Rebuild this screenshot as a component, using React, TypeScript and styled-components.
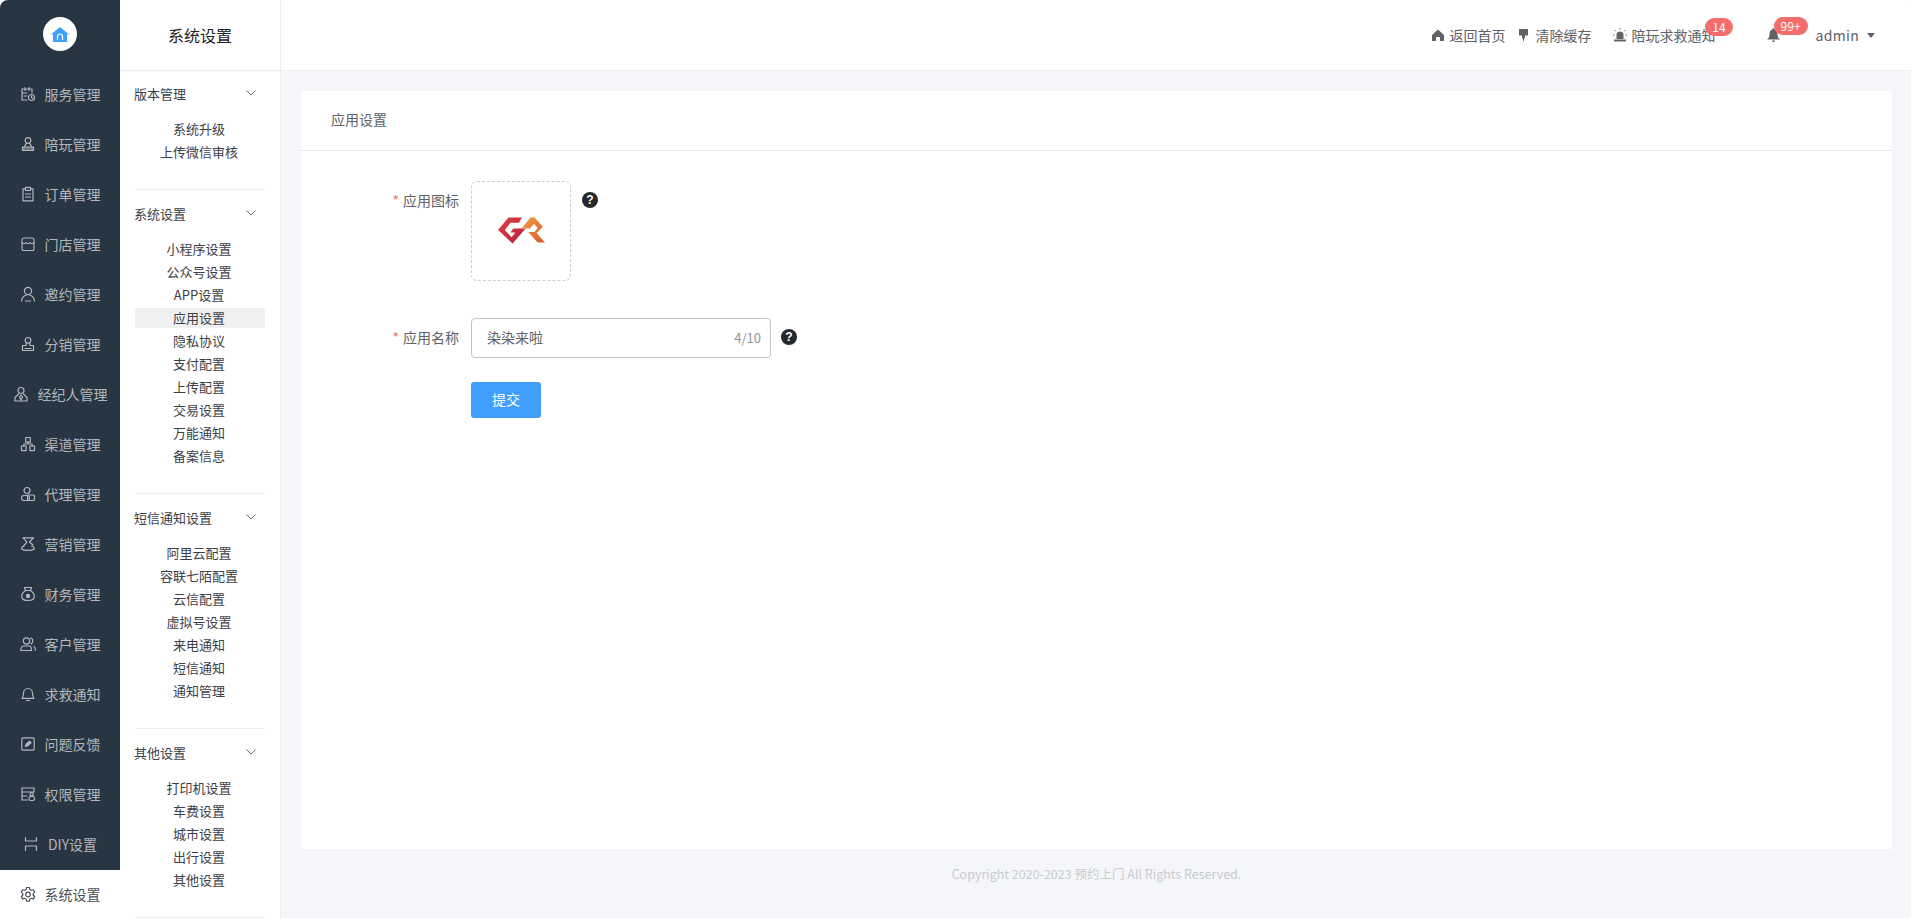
import React from "react"
import styled, { createGlobalStyle } from "styled-components"

const FONT = `"Noto Sans CJK SC", "Noto Sans", sans-serif`

const GlobalStyle = createGlobalStyle`
  html, body { margin: 0; padding: 0; background: #fff; }
  body { font-family: ${FONT}; }
  * { box-sizing: border-box; }
`

const Shell = styled.div`
  display: flex;
  width: 1912px;
  height: 920px;
  overflow: hidden;
  border-radius: 8px;
  background: #fff;
`

const Rail = styled.aside`
  width: 120px;
  flex-shrink: 0;
  background: #fff;
`

const RailDark = styled.div`
  height: 870px;
  background: #283543;
`

const LogoBox = styled.div`
  height: 70px;
  padding-bottom: 2px;
  display: flex;
  align-items: center;
  justify-content: center;
`

const LogoCircle = styled.div`
  width: 34px;
  height: 34px;
  border-radius: 50%;
  background: #fff;
  display: flex;
  align-items: center;
  justify-content: center;
`

const RailItem = styled.div<{ $active?: boolean }>`
  height: 50px;
  padding-bottom: 2px;
  display: flex;
  align-items: center;
  justify-content: center;
  gap: 9px;
  font-size: 14px;
  color: ${(p) => (p.$active ? "#4a4f57" : "#b4b8bd")};
  background: ${(p) => (p.$active ? "#fff" : "transparent")};
  white-space: nowrap;
`

const SubMenu = styled.div`
  width: 161px;
  flex-shrink: 0;
  background: #fff;
  border-right: 1px solid #eceef2;
  overflow: hidden;
`

const SubTitle = styled.div`
  height: 71px;
  margin-bottom: -1px;
  border-bottom: 1px solid #eceef2;
  display: flex;
  align-items: center;
  justify-content: center;
  font-size: 16px;
  color: #222;
`

const Group = styled.div`
  margin: 0 15px;
  padding-bottom: 25px;
  border-bottom: 1px solid #eceef2;
`

const GroupHead = styled.div`
  height: 48px;
  padding: 0 9px 2px 0;
  margin-left: -1px;
  display: flex;
  align-items: center;
  justify-content: space-between;
  font-size: 13px;
  color: #3c4047;
  white-space: nowrap;
`

const SubList = styled.div`
  display: flex;
  flex-direction: column;
  gap: 3px;
  padding: 1px 0 2px;
`

const SubItem = styled.div<{ $active?: boolean }>`
  height: 20px;
  padding: 0 2px 2px 0;
  display: flex;
  align-items: center;
  justify-content: center;
  font-size: 13px;
  color: #3c4047;
  border-radius: 2px;
  background: ${(p) => (p.$active ? "#f0f0f0" : "transparent")};
`

const Column = styled.div`
  flex: 1;
  min-width: 0;
  display: flex;
  flex-direction: column;
  margin-bottom: 2px;
  margin-right: 1px;
  background: #f5f6fa;
`

const TopBar = styled.header`
  height: 71px;
  flex-shrink: 0;
  background: #fff;
  border-bottom: 1px solid #eceef2;
  display: flex;
  align-items: center;
  justify-content: flex-end;
  padding-right: 36px;
  font-size: 14px;
  color: #606266;
`

const TopLink = styled.div<{ $gap: number; $after: number }>`
  position: relative;
  display: flex;
  align-items: center;
  gap: ${(p) => p.$gap}px;
  margin-right: ${(p) => p.$after}px;
  white-space: nowrap;
`

const Badge = styled.span<{ $right: number; $top: number }>`
  position: absolute;
  top: ${(p) => p.$top}px;
  right: ${(p) => p.$right}px;
  height: 18px;
  padding: 0 7px;
  border-radius: 9px;
  background: #f56c6c;
  color: #fff;
  font-size: 12px;
  line-height: 18px;
`

const AdminName = styled.span`
  letter-spacing: 0.3px;
`

const Caret = styled.span`
  width: 0;
  height: 0;
  border-left: 4px solid transparent;
  border-right: 4px solid transparent;
  border-top: 5px solid #606266;
  margin-left: 8px;
`

const Body = styled.main`
  flex: 1;
  display: flex;
  flex-direction: column;
  padding: 20px 19px 0 20px;
`

const Card = styled.section`
  height: 758px;
  background: #fff;
`

const CardHead = styled.div`
  height: 60px;
  padding: 0 0 3px 30px;
  border-bottom: 1px solid #e4e6ea;
  display: flex;
  align-items: center;
  font-size: 14px;
  color: #606266;
`

const Form = styled.div`
  padding-top: 30px;
`

const FormRow = styled.div<{ $after: number }>`
  display: flex;
  align-items: flex-start;
  margin-bottom: ${(p) => p.$after}px;
`

const Label = styled.label`
  width: 170px;
  height: 40px;
  padding: 0 12px 2px 0;
  display: flex;
  align-items: center;
  justify-content: flex-end;
  font-size: 14px;
  color: #606266;
`

const Star = styled.span`
  color: #f56c6c;
  margin-right: 4px;
`

const Upload = styled.div`
  width: 100px;
  height: 100px;
  padding-left: 2px;
  border: 1px dashed #c9ccd2;
  border-radius: 6px;
  display: flex;
  align-items: center;
  justify-content: center;
`

const InputBox = styled.div`
  width: 300px;
  height: 40px;
  border: 1px solid #bfc2c8;
  border-radius: 4px;
  display: flex;
  align-items: center;
  justify-content: space-between;
  padding: 0 9px 2px 15px;
`

const InputText = styled.input`
  flex: 1;
  min-width: 0;
  border: 0;
  outline: 0;
  padding: 0;
  background: transparent;
  font-family: ${FONT};
  font-size: 14px;
  color: #606266;
`

const Counter = styled.span`
  font-size: 13px;
  color: #909399;
`

const Help = styled.span<{ $left: number }>`
  width: 16px;
  height: 16px;
  margin: 11px 0 0 ${(p) => p.$left}px;
  border-radius: 50%;
  background: #26282b;
  color: #fff;
  font-family: "Liberation Sans", sans-serif;
  font-size: 12px;
  font-weight: 700;
  line-height: 16px;
  text-align: center;
`

const Submit = styled.button`
  width: 70px;
  height: 36px;
  margin-left: 170px;
  padding: 0 0 2px;
  border: 0;
  border-radius: 3px;
  background: #409eff;
  color: #fff;
  font-family: ${FONT};
  font-size: 14px;
`

const Footer = styled.footer`
  flex: 1;
  display: flex;
  align-items: flex-start;
  justify-content: center;
  padding-top: 15px;
  font-size: 12.5px;
  color: #c9cbcf;
`

const RailSvg = styled.svg`
  width: 16px;
  height: 16px;
  flex-shrink: 0;
  fill: none;
  stroke: currentColor;
  stroke-width: 1.2;
  stroke-linecap: round;
  stroke-linejoin: round;
`

const ICONS: Record<string, React.ReactNode> = {
  service: (
    <>
      <path d="M7 14H2V3h10v4M5 1.5v3M9 1.5v3M2 7h5M4 10h3" />
      <circle cx="11.5" cy="11.5" r="3" />
      <path d="M11.5 10v1.6l1 .6" />
    </>
  ),
  escort: (
    <>
      <circle cx="8" cy="4.5" r="2.8" />
      <path d="M6.5 7.3 4 11M9.5 7.3 12 11M2.5 14.5v-3.3h11v3.3z" />
      <path d="M2.5 13h11" />
    </>
  ),
  order: (
    <>
      <path d="M5 2.8H3v12h10v-12h-2" />
      <rect x="5.5" y="1.3" width="5" height="3" />
      <path d="M5.5 8h5M5.5 11h5" />
    </>
  ),
  store: (
    <>
      <path d="M4 2h8a2 2 0 0 1 2 2v9a1.5 1.5 0 0 1-1.500 1.500h-9A1.500 1.500 0 0 1 2 13V4a2 2 0 0 1 2-2z" />
      <path d="M2 6.500c1 1.500 3 1.500 4 0 1 1.500 3 1.500 4 0 1 1.500 3 1.500 4 0" />
    </>
  ),
  invite: (
    <>
      <circle cx="8" cy="5" r="3.6" />
      <path d="M1.500 15c.4-3.400 2.600-5.300 4.800-6M14.500 15c-.4-3.400-2.600-5.300-4.800-6M5.500 15h5" />
    </>
  ),
  dist: (
    <>
      <circle cx="8" cy="4.300" r="2.800" />
      <path d="M6.300 7 6 9.500H2.500v5h11v-5H10L9.700 7M5 12.500h6" />
    </>
  ),
  agent: (
    <>
      <circle cx="8" cy="4.500" r="3" />
      <path d="M5.500 8 2 11.500V15h12v-3.500L10.500 8M8 9l-1.500 2L8 14l1.500-3z" />
    </>
  ),
  channel: (
    <>
      <rect x="5.700" y="1.500" width="4.600" height="4.600" />
      <rect x="1.500" y="10" width="4.600" height="4.600" />
      <rect x="9.900" y="10" width="4.600" height="4.600" />
      <path d="M8 6.100V8M3.800 10V8h8.400v2" />
    </>
  ),
  proxy: (
    <>
      <circle cx="7" cy="4.500" r="3" />
      <rect x="1.500" y="9.500" width="8" height="5" rx="2.500" />
      <rect x="7.500" y="9" width="7" height="5.500" rx="1" />
    </>
  ),
  market: (
    <>
      <path d="M3 1.800h10.500L9.500 6 13 9M3 1.800l4 4.400L3.500 10" />
      <path d="M4 10c-2 .8-2.500 2-2.200 3.200 2.500 1.600 9.500 1.600 12.500 0 .2-1.400-.8-2.600-2.800-3.200" />
    </>
  ),
  money: (
    <>
      <path d="M5.500 4.500 4.500 1.500h7l-1 3" />
      <path d="M5.500 4.500h5c2.500 1.700 3.800 4 3.800 6 0 3-2.800 4-6.300 4s-6.300-1-6.300-4c0-2 1.300-4.300 3.800-6z" />
      <circle cx="8" cy="10" r="1.600" fill="currentColor" />
    </>
  ),
  customer: (
    <>
      <circle cx="6.500" cy="5" r="3.200" />
      <path d="M1 14.500v-1.300C1 11 2.800 10 4.500 10h4c1.700 0 3 1 3 3.200v1.300zM10.500 2c1.500.4 2.300 1.700 2.300 3s-.8 2.400-1.800 2.900M14 10.500c1 .6 1.500 1.800 1.300 4" />
    </>
  ),
  rescue: (
    <>
      <path d="M2 12.300c1.200-1.200 1.500-2.600 1.500-5 0-2.700 2-4.800 4.500-4.800s4.500 2.100 4.500 4.800c0 2.400.3 3.800 1.500 5z" />
      <path d="M6.500 14.500h3" />
    </>
  ),
  feedback: (
    <>
      <rect x="1.800" y="1.800" width="12.400" height="12.400" rx="1.500" />
      <path d="M5.500 10.500 6 8.500l3.500-3.300 1.500 1.500L7.500 10z" fill="currentColor" />
    </>
  ),
  auth: (
    <>
      <path d="M7.500 14H2V2h12v4M2 6h12M2 10h5" />
      <rect x="9" y="10.500" width="5.500" height="4" rx="1.500" />
      <circle cx="11.700" cy="8.300" r="1.600" />
    </>
  ),
  diy: <path d="M2.500 1.500V5h11V1.500M2.500 14.500V10h11v4.500" />,
  system: (
    <>
      <path d="M6.600 1.500h2.800l.4 1.900 1.600.9 1.900-.6 1.400 2.400-1.500 1.300v1.800l1.500 1.300-1.400 2.400-1.900-.6-1.600.9-.4 1.900H6.600l-.4-1.900-1.600-.9-1.900.6-1.400-2.400 1.500-1.300V7.600L1.300 6.100l1.400-2.400 1.900.6 1.600-.9z" />
      <circle cx="8" cy="8.500" r="2.300" />
    </>
  ),
}

const NAV = [
  ["service", "服务管理"],
  ["escort", "陪玩管理"],
  ["order", "订单管理"],
  ["store", "门店管理"],
  ["invite", "邀约管理"],
  ["dist", "分销管理"],
  ["agent", "经纪人管理"],
  ["channel", "渠道管理"],
  ["proxy", "代理管理"],
  ["market", "营销管理"],
  ["money", "财务管理"],
  ["customer", "客户管理"],
  ["rescue", "求救通知"],
  ["feedback", "问题反馈"],
  ["auth", "权限管理"],
  ["diy", "DIY设置"],
]

const GROUPS = [
  { title: "版本管理", items: ["系统升级", "上传微信审核"] },
  {
    title: "系统设置",
    items: ["小程序设置", "公众号设置", "APP设置", "应用设置", "隐私协议", "支付配置", "上传配置", "交易设置", "万能通知", "备案信息"],
  },
  { title: "短信通知设置", items: ["阿里云配置", "容联七陌配置", "云信配置", "虚拟号设置", "来电通知", "短信通知", "通知管理"] },
  { title: "其他设置", items: ["打印机设置", "车费设置", "城市设置", "出行设置", "其他设置"] },
]

const Chevron = () => (
  <svg width="10" height="6" viewBox="0 0 10 6" fill="none" stroke="#6b6f76" strokeWidth="1">
    <path d="M.5.5 5 5 9.500.5" />
  </svg>
)

const GrLogo = () => (
  <svg width="50" height="30" viewBox="0 0 48 28">
    <defs>
      <linearGradient id="grRed" x1="0" y1="0" x2="1" y2="1">
        <stop offset="0" stopColor="#e2403f" />
        <stop offset="1" stopColor="#b81f3f" />
      </linearGradient>
      <linearGradient id="grOrange" x1="0" y1="0" x2="1" y2="1">
        <stop offset="0" stopColor="#eea043" />
        <stop offset="1" stopColor="#e2552f" />
      </linearGradient>
    </defs>
    <path fill="url(#grRed)" d="M11 1h13l-3 5h-8L7.500 13l6.500 7 3.500-4.500H13l2.500-4h12L15 26 1 13z" />
    <path fill="url(#grOrange)" d="M24 11 32 1h4l8 9-6 6 8 9h-7l-9-10h6l3-4-3.500-4-4 4.500h-7z" />
  </svg>
)

export default function App() {
  return (
    <Shell>
      <GlobalStyle />
      <Rail>
        <RailDark>
          <LogoBox>
            <LogoCircle>
              <svg width="18" height="15" viewBox="0 0 18 15">
                <path fill="#409eff" d="M9 0 18 7.500h-2V15H2V7.500H0z" />
                <path fill="none" stroke="#fff" strokeWidth="1.200" d="M6.500 13V9.500a2.500 2.500 0 0 1 5 0V13" />
              </svg>
            </LogoCircle>
          </LogoBox>
          {NAV.map(([icon, label]) => (
            <RailItem key={label}>
              <RailSvg viewBox="0 0 16 16">{ICONS[icon]}</RailSvg>
              {label}
            </RailItem>
          ))}
        </RailDark>
        <RailItem $active>
          <RailSvg viewBox="0 0 16 16">{ICONS.system}</RailSvg>
          系统设置
        </RailItem>
      </Rail>

      <SubMenu>
        <SubTitle>系统设置</SubTitle>
        {GROUPS.map((g) => (
          <Group key={g.title}>
            <GroupHead>
              {g.title}
              <Chevron />
            </GroupHead>
            <SubList>
              {g.items.map((item) => (
                <SubItem key={item} $active={item === "应用设置"}>
                  {item}
                </SubItem>
              ))}
            </SubList>
          </Group>
        ))}
      </SubMenu>

      <Column>
        <TopBar>
          <TopLink $gap={6} $after={13}>
            <svg width="12" height="12" viewBox="0 0 12 12">
              <path fill="#606266" d="M6 .5 12 6v6H8V8H4v4H0V6z" />
            </svg>
            返回首页
          </TopLink>
          <TopLink $gap={8} $after={21}>
            <svg width="9" height="13" viewBox="0 0 9 13">
              <path fill="#606266" d="M0 0h9v6.500H6V9H5.500L4.500 13l-1-4H3V6.500H0z" />
            </svg>
            清除缓存
          </TopLink>
          <TopLink $gap={5} $after={51}>
            <svg width="14" height="14" viewBox="0 0 14 14" fill="none" stroke="#606266">
              <path d="M3.500 11V7a3.500 3.500 0 0 1 7 0v4z" fill="#606266" stroke="none" />
              <path d="M1 12.500h12" strokeWidth="2" />
              <path d="M7 0v1.500M1.500 2 2.600 3.200M12.500 2l-1.100 1.200M0 7h1.500M12.500 7H14" strokeWidth="1" />
            </svg>
            陪玩求救通知
            <Badge $right={-17} $top={-7}>14</Badge>
          </TopLink>
          <TopLink $gap={0} $after={36}>
            <svg width="13" height="14" viewBox="0 0 13 14">
              <path fill="#606266" d="M6.500 0a1 1 0 0 1 1 1v.6C9.500 2 10.500 4 10.500 6c0 3 .8 4.200 2.500 5.500H0C1.700 10.200 2.500 9 2.500 6c0-2 1-4 3-4.400V1a1 1 0 0 1 1-1zM5 12.500h3a1.500 1.500 0 0 1-3 0z" />
            </svg>
            <Badge $right={-28} $top={-11}>99+</Badge>
          </TopLink>
          <TopLink $gap={0} $after={0}>
            <AdminName>admin</AdminName>
            <Caret />
          </TopLink>
        </TopBar>
        <Body>
          <Card>
            <CardHead>应用设置</CardHead>
            <Form>
              <FormRow $after={37}>
                <Label>
                  <Star>*</Star>应用图标
                </Label>
                <Upload>
                  <GrLogo />
                </Upload>
                <Help $left={11}>?</Help>
              </FormRow>
              <FormRow $after={24}>
                <Label>
                  <Star>*</Star>应用名称
                </Label>
                <InputBox>
                  <InputText readOnly value="染染来啦" />
                  <Counter>4/10</Counter>
                </InputBox>
                <Help $left={10}>?</Help>
              </FormRow>
              <Submit>提交</Submit>
            </Form>
          </Card>
          <Footer>Copyright 2020-2023 预约上门 All Rights Reserved.</Footer>
        </Body>
      </Column>
    </Shell>
  )
}
